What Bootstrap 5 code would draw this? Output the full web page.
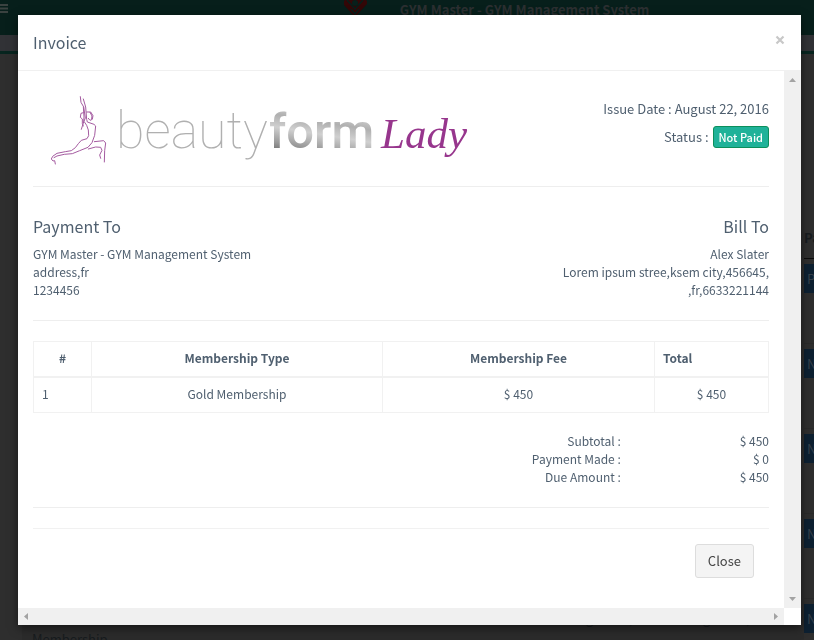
<!DOCTYPE html>
<html lang="en">
<head>
<meta charset="utf-8">
<meta name="viewport" content="width=device-width, initial-scale=1">
<title>Invoice</title>
<link href="https://cdn.jsdelivr.net/npm/bootstrap@5.3.0/dist/css/bootstrap.min.css" rel="stylesheet">
<style>
body{font-family:"Noto Sans CJK SC","Noto Sans",sans-serif;font-size:12px;line-height:18px;color:#4f5f6f;background:#2e2e2e;height:100vh;overflow:hidden}
.page-top{height:35px;background:#071f1b}
.page-brand{padding-left:41%}
.page-title{font-size:13px;line-height:20px;font-weight:700;color:#2c2f31;padding-left:33px}
.page-tools{height:16px;background:#313236}
.page-rule{height:3px;background:#07251f}
.burger{width:9px;height:15px}
.page-col{width:10px;padding-top:174px}
.page-head{font-size:13px;line-height:20px;height:31px;font-weight:700;color:#171b1e;border-bottom:1px solid #0c0c0c}
.page-cell{height:85px;padding-top:5px;border-bottom:1px solid #2a2a2a}
.page-btn{display:block;width:10px;height:29px;padding:0 0 0 3px;border:0;background:#0d2031;color:#36414b;font-size:13px;line-height:28px;text-align:left;overflow:hidden}
.page-foot{height:30px;margin:-30px 10px 0 22px;padding-left:10px;background:#2b2b2b;font-size:13px;line-height:18px;color:#171b1e}
.page-member{padding-top:20px}
.page-date{width:117px}
.invoice-modal{padding:15px 13px 15px 18px}
.sheet{box-shadow:0 3px 9px rgba(0,0,0,.5);background:#fff}
.sheet-head{height:56px;padding:0 15px 2px;border-bottom:1px solid #f0f0f0}
.sheet-head h1,.party h2{font-size:16px;line-height:22px;margin:0;font-weight:400}
.x-btn{border:0;background:none;padding:0;color:#ccc;width:11px;height:20px;margin-top:-4px}
.pane{padding:15px 15px 0}
.vbar{width:17px;background:#f0f0f0}
.hbar{height:17px;background:#f0f0f0}
.hbar-wrap{padding-right:17px}
.logo{width:440px;height:80px}
.issue{font-size:13px;line-height:20px;padding-top:13px}
.status-line{padding-top:7px}
.status-tag{font-size:11px;line-height:16px;padding:2px 5px;border:1px solid #0c8f5c;background:#1fb299;color:#fff;border-radius:3px;font-weight:500}
.rule{margin:20px 0;border:0;border-top:1px solid #eee;opacity:1}
.party{padding-bottom:1px}
.party h2{margin:8px 0}
.inv-table{margin:0 0 19px;color:inherit;border-color:#f1f1f1}
.inv-table th,.inv-table td{padding:8px;border:1px solid #f1f1f1;line-height:18px}
.inv-table thead th{border-bottom-width:2px;padding-top:7px;padding-bottom:9px}
.inv-table tbody td{padding-top:7px;padding-bottom:9px}
.c-num{width:58px}.c-type{width:291px}.c-fee{width:272px}.c-total{width:114px}
.sums{padding-bottom:1px}
.sums dt{font-weight:400;width:80%;padding-right:1px}
.sums dd{width:20%;margin:0}
.sheet-foot{border-top:1px solid #f1f1f1;padding:15px}
.close-btn{font-size:13px;line-height:20px;padding:6px 12px;border:1px solid #ddd;border-radius:3px;background:#f4f4f4;color:#444}
</style>
<script src="https://cdn.jsdelivr.net/npm/bootstrap@5.3.0/dist/js/bootstrap.bundle.min.js"></script>
</head>
<body>
<div class="d-flex flex-column h-100 overflow-hidden" aria-hidden="true">
  <div class="page-top d-flex align-items-start flex-shrink-0">
    <svg class="burger" viewBox="0 0 9 15"><path d="M0 4h8v2H0zM0 7.500h8v2H0zM0 11h8v2H0z" fill="#3a4240"/></svg>
    <div class="page-brand flex-fill d-flex">
      <svg width="24" height="20" viewBox="0 0 24 20"><path d="M1 1L5-3H20L24 1V4L12 17L1 5Z" fill="#330707"/><path d="M4 0l8 9 8-9M8 9l4 5 4-5" fill="none" stroke="#071f1b" stroke-width="1.500"/><circle cx="12" cy="3" r="3" fill="#071f1b"/></svg>
      <span class="page-title">GYM Master - GYM Management System</span>
    </div>
  </div>
  <div class="page-tools flex-shrink-0"></div>
  <div class="page-rule flex-shrink-0"></div>
  <div class="flex-fill d-flex justify-content-end overflow-hidden">
    <div class="page-col overflow-hidden">
      <div class="page-head">Pa</div>
      <div class="page-cell"><button class="page-btn" tabindex="-1">P</button></div>
      <div class="page-cell"><button class="page-btn" tabindex="-1">N</button></div>
      <div class="page-cell"><button class="page-btn" tabindex="-1">N</button></div>
      <div class="page-cell"><button class="page-btn" tabindex="-1">N</button></div>
      <div class="page-cell"><button class="page-btn" tabindex="-1">N</button></div>
    </div>
  </div>
  <div class="page-foot d-flex flex-shrink-0 overflow-hidden"><span class="page-member me-auto">Membership</span><span class="page-date">August 22, 2016</span><span class="page-date">August 21, 2017</span></div>
</div>

<div class="modal invoice-modal d-block" role="dialog" aria-labelledby="inv-title">
  <div class="sheet h-100 d-flex flex-column">
    <div class="sheet-head d-flex align-items-center justify-content-between flex-shrink-0">
      <h1 id="inv-title">Invoice</h1>
      <button type="button" class="x-btn d-flex align-items-center" aria-label="Close dialog"><svg width="10" height="10" viewBox="0 0 10 10"><path d="M1.500 1.500l7 7M8.500 1.500l-7 7" stroke="#c8c8c8" stroke-width="2.200"/></svg></button>
    </div>
    <div class="d-flex flex-fill overflow-hidden">
      <div class="pane flex-fill overflow-hidden">
        <div class="d-flex justify-content-between">
          <svg class="logo" viewBox="0 0 440 80" role="img" aria-label="beautyform Lady">
            <defs><linearGradient id="metal" x1="0" y1="1" x2=".3" y2="0"><stop offset="0" stop-color="#444"/><stop offset=".3" stop-color="#999"/><stop offset=".55" stop-color="#d0d0d0"/><stop offset=".75" stop-color="#b0b0b0"/><stop offset="1" stop-color="#ddd"/></linearGradient></defs>
            <g transform="translate(7 4) scale(.3333)" fill="none" stroke="#a45aa0" stroke-width="3" stroke-linecap="round" stroke-linejoin="round">
              <path d="M121 20l2 17 7 12 2 32-1 15-7 22M130 27l7 24 3 37 2 8 20 7 5 5-3 28-8 22-12 14-25 10-22 9-24 2-22 5-9 5"/>
              <path d="M131 50l5 34-4 10 8 12 5 14 1 17-5 9-17 5-9 10-9 12-12 9-18 3-25 5-13 9-4 8 5 6 5-1 2 10"/>
              <path d="M130 68l-7 2-2 12 6 5 0 14 3 7M140 66l12 0 7 11-2 11-7 3-5-6M150 67l6 11-1 8"/>
              <path d="M163 155l28-3 6 7-3 23-1 34M145 177l22-6 15 1 4 9-7 14 3 10"/>
            </g>
            <text x="83" y="62" font-family="Roboto, sans-serif" font-weight="100" font-size="52" fill="#b0b0b0">beauty</text>
            <text x="236" y="62" font-family="Roboto, sans-serif" font-weight="500" font-size="49" fill="url(#metal)">form</text>
            <text x="348" y="62" font-family="Liberation Serif, serif" font-style="italic" font-size="43" fill="#97368d">Lady</text>
          </svg>
          <div class="issue text-end">
            <div>Issue Date : August 22, 2016</div>
            <div class="status-line d-flex justify-content-end align-items-center"><span class="me-1">Status :</span><span class="status-tag">Not Paid</span></div>
          </div>
        </div>
        <hr class="rule">
        <div class="party d-flex justify-content-between">
          <div><h2>Payment To</h2>GYM Master - GYM Management System<br>address,fr<br>1234456</div>
          <div class="text-end"><h2>Bill To</h2>Alex Slater<br>Lorem ipsum stree,ksem city,456645,<br>,fr,6633221144</div>
        </div>
        <hr class="rule">
        <table class="table inv-table text-center">
          <colgroup><col class="c-num"><col class="c-type"><col class="c-fee"><col class="c-total"></colgroup>
          <thead><tr><th scope="col">#</th><th scope="col">Membership Type</th><th scope="col">Membership Fee</th><th scope="col" class="text-start">Total</th></tr></thead>
          <tbody><tr><td class="text-start">1</td><td>Gold Membership</td><td>$ 450</td><td>$ 450</td></tr></tbody>
        </table>
        <dl class="sums d-flex flex-wrap text-end mb-0">
          <dt>Subtotal :</dt><dd>$ 450</dd>
          <dt>Payment Made :</dt><dd>$ 0</dd>
          <dt>Due Amount :</dt><dd>$ 450</dd>
        </dl>
        <hr class="rule">
        <div class="sheet-foot text-end"><button type="button" class="btn close-btn">Close</button></div>
      </div>
      <div class="vbar flex-shrink-0 d-flex flex-column justify-content-between">
        <svg width="17" height="17" viewBox="0 0 17 17"><path d="M5 11h7L8.500 7z" fill="#a3a3a3"/></svg>
        <svg width="17" height="17" viewBox="0 0 17 17"><path d="M5 6h7L8.500 10z" fill="#a3a3a3"/></svg>
      </div>
    </div>
    <div class="hbar-wrap flex-shrink-0"><div class="hbar d-flex justify-content-between">
      <svg width="17" height="17" viewBox="0 0 17 17"><path d="M10 5v7L6 8.500z" fill="#a3a3a3"/></svg>
      <svg width="17" height="17" viewBox="0 0 17 17"><path d="M7 5v7l4-3.500z" fill="#a3a3a3"/></svg>
    </div></div>
  </div>
</div>
</body>
</html>
